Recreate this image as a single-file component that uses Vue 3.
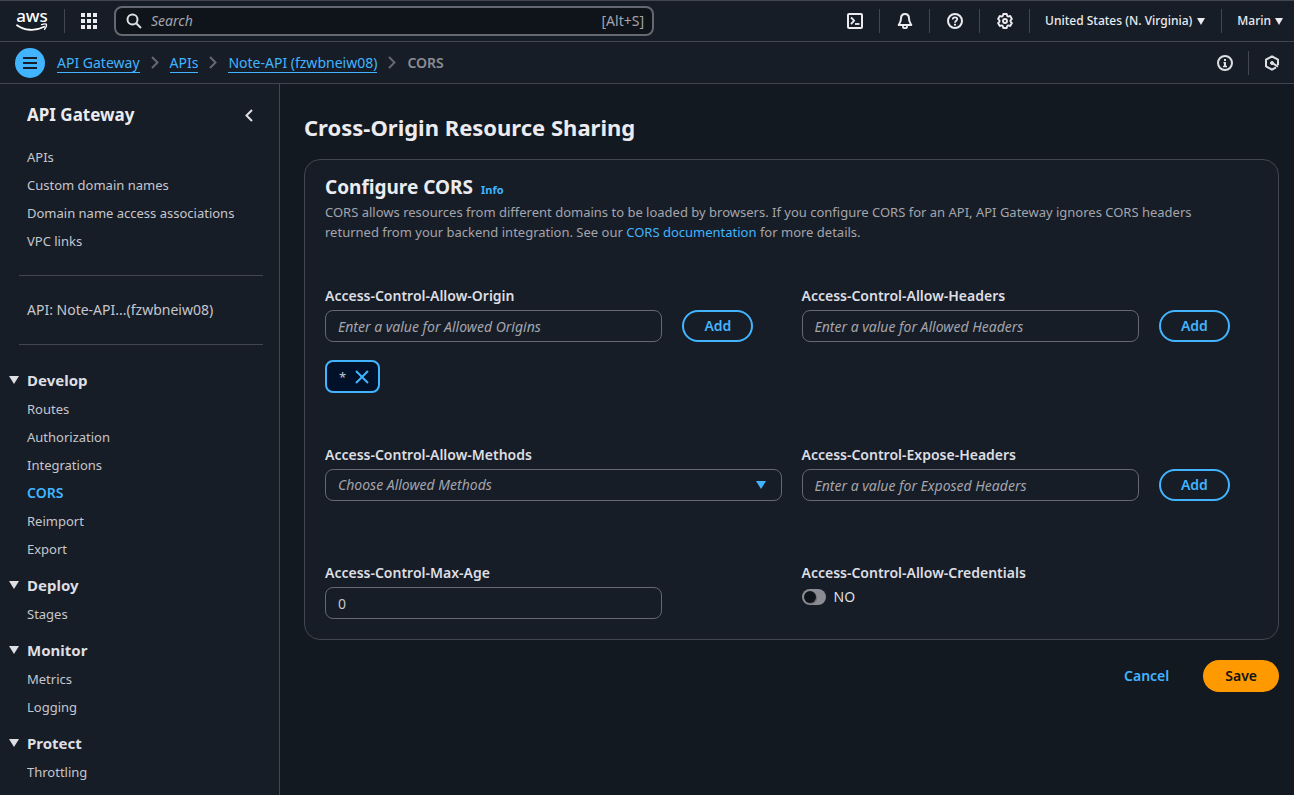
<script setup>
import { ref } from 'vue'

const topLinks = ['APIs', 'Custom domain names', 'Domain name access associations', 'VPC links']
const sections = [
  { title: 'Develop', items: ['Routes', 'Authorization', 'Integrations', 'CORS', 'Reimport', 'Export'] },
  { title: 'Deploy', items: ['Stages'] },
  { title: 'Monitor', items: ['Metrics', 'Logging'] },
  { title: 'Protect', items: ['Throttling'] }
]
const crumbs = ['API Gateway', 'APIs', 'Note-API (fzwbneiw08)']

const origin = ref('')
const headers = ref('')
const exposed = ref('')
const method = ref('')
const maxAge = ref('0')
const credentials = ref(false)
const origins = ref(['*'])

function addOrigin() {
  if (origin.value) origins.value.push(origin.value)
  origin.value = ''
}
</script>

<template>
  <div class="page">
    <header class="topbar">
      <a class="logo" href="#" aria-label="AWS home">
        <span class="logo-text">aws</span>
        <svg width="32" height="9" viewBox="0 0 32 9" fill="none" stroke="#fff" stroke-linecap="round" stroke-linejoin="round" aria-hidden="true">
          <path d="M1 2.2C8 7.4 19 8.6 28.2 3.8" stroke-width="1.8" />
          <path d="M25.6 1.6C27.6.9 29.4.7 30.3 1.2c.4 1.200-.2 3.300-1.700 5" stroke-width="1.400" />
        </svg>
      </a>
      <span class="sep"></span>
      <button class="icon-btn apps" aria-label="Services">
        <svg width="16" height="16" viewBox="0 0 16 16" fill="#ebebf0">
          <path d="M0 0h4v4H0zM6 0h4v4H6zM12 0h4v4h-4zM0 6h4v4H0zM6 6h4v4H6zM12 6h4v4h-4zM0 12h4v4H0zM6 12h4v4H6zM12 12h4v4h-4z" />
        </svg>
      </button>
      <label class="search">
        <svg width="16" height="16" viewBox="0 0 16 16" fill="none" stroke="#dedee3" stroke-width="2">
          <circle cx="6.500" cy="6.500" r="5" /><path d="M10.200 10.200 15 15" />
        </svg>
        <input type="search" placeholder="Search" aria-label="Search" />
        <span>[Alt+S]</span>
      </label>
      <div class="tools">
        <button class="icon-btn" aria-label="CloudShell">
          <svg width="16" height="16" viewBox="0 0 16 16" fill="none" stroke="#ebebf0" stroke-width="2" stroke-linejoin="round">
            <rect x="1" y="1" width="14" height="14" rx="1" /><path d="M4 4.500 7.200 7.700 4 11" stroke-width="1.800" /><path d="M8 11h4.500" stroke-width="1.800" />
          </svg>
        </button>
        <button class="icon-btn" aria-label="Notifications">
          <svg width="16" height="16" viewBox="0 0 16 16" fill="none" stroke="#ebebf0" stroke-width="2" stroke-linejoin="round">
            <path d="M8 1C5.200 1 4 3 4 5.500 4 8.500 3 9.500 1.700 12h12.600C13 9.500 12 8.500 12 5.500 12 3 10.800 1 8 1z" /><path d="M6 13v1.200c0 .6.800.9 2 .9s2-.3 2-.9V13" stroke-width="1.800" />
          </svg>
        </button>
        <button class="icon-btn" aria-label="Help">
          <svg width="16" height="16" viewBox="0 0 16 16" fill="none" stroke="#ebebf0" stroke-width="2">
            <circle cx="8" cy="8" r="7" /><path d="M5.700 6.500c0-1.500 1-2.200 2.300-2.200s2.300.8 2.300 2C10.300 7.800 8 7.800 8 9.700" stroke-width="1.700" /><path d="M8 10.800v1.800" />
          </svg>
        </button>
        <button class="icon-btn" aria-label="Settings">
          <svg width="16" height="16" viewBox="0 0 16 16" fill="none" stroke="#ebebf0" stroke-width="1.900" stroke-linejoin="round">
            <path d="M6.300 1h3.400l.5 2 1 .6 2-.6 1.700 2.900L13.500 7.400v1.200l1.400 1.500-1.700 2.900-2-.6-1 .6-.5 2H6.300l-.5-2-1-.6-2 .6-1.700-2.900 1.400-1.500V7.400L1.100 5.900 2.800 3l2 .6 1-.6z" /><circle cx="8" cy="8" r="2" />
          </svg>
        </button>
        <button class="menu">United States (N. Virginia)
          <svg width="8" height="7" viewBox="0 0 8 7" fill="#ebebf0"><path d="M0 0h8L4 7z" /></svg>
        </button>
        <button class="menu user">Marin
          <svg width="8" height="7" viewBox="0 0 8 7" fill="#ebebf0"><path d="M0 0h8L4 7z" /></svg>
        </button>
      </div>
    </header>

    <div class="crumbbar">
      <button class="nav-toggle" aria-label="Toggle navigation">
        <svg width="14" height="12" viewBox="0 0 14 12" stroke="#161d26" stroke-width="2"><path d="M0 1h14M0 6h14M0 11h14" /></svg>
      </button>
      <nav class="crumbs" aria-label="Breadcrumbs">
        <template v-for="c in crumbs" :key="c">
          <a href="#">{{ c }}</a>
          <svg width="8" height="13" viewBox="0 0 8 13" fill="none" stroke="#656871" stroke-width="2"><path d="M1 1l5.500 5.500L1 12" /></svg>
        </template>
        <span>CORS</span>
      </nav>
      <div class="crumb-tools">
        <button class="icon-btn" aria-label="Information">
          <svg width="16" height="16" viewBox="0 0 16 16" fill="none" stroke="#dedee3" stroke-width="2">
            <circle cx="8" cy="8" r="7" /><path d="M8 4v2" /><path d="M6.500 7.800H8V11M6 11.500h4" stroke-width="1.500" /><path d="M8 7v4.500" />
          </svg>
        </button>
        <span class="sep"></span>
        <button class="icon-btn" aria-label="Tools">
          <svg width="16" height="16" viewBox="0 0 16 16" fill="none" stroke="#dedee3" stroke-width="2" stroke-linejoin="round">
            <path d="M14 10V4.700L8 1.300 2 4.700v6.600l6 3.400 4-2.300" /><path d="M8 7.800l6 3.800" stroke-width="2" /><circle cx="8" cy="8" r="1.500" fill="#dedee3" stroke-width="1" />
          </svg>
        </button>
      </div>
    </div>

    <div class="body">
      <aside class="sidebar">
        <div class="side-head">
          <h2>API Gateway</h2>
          <button class="icon-btn" aria-label="Close navigation">
            <svg width="8" height="13" viewBox="0 0 8 13" fill="none" stroke="#dedee3" stroke-width="2"><path d="M7 1 1.500 6.500 7 12" /></svg>
          </button>
        </div>
        <ul class="links">
          <li v-for="l in topLinks" :key="l"><a href="#">{{ l }}</a></li>
        </ul>
        <hr />
        <p class="api-name">API: Note-API...(fzwbneiw08)</p>
        <hr />
        <section v-for="s in sections" :key="s.title" class="group">
          <h3>
            <button>
              <svg width="10" height="8" viewBox="0 0 10 8" fill="#dedee3"><path d="M0 0h10L5 8z" /></svg>
              {{ s.title }}
            </button>
          </h3>
          <ul class="links">
            <li v-for="i in s.items" :key="i"><a href="#" :class="{ active: i === 'CORS' }">{{ i }}</a></li>
          </ul>
        </section>
      </aside>

      <main>
        <h1>Cross-Origin Resource Sharing</h1>
        <form @submit.prevent>
          <div class="card">
            <div class="card-head">
              <h2>Configure CORS</h2>
              <a class="info" href="#">Info</a>
            </div>
            <p class="desc">CORS allows resources from different domains to be loaded by browsers. If you configure CORS for an API, API Gateway ignores CORS headers returned from your backend integration. See our <a href="#">CORS documentation</a> for more details.</p>

            <div class="fields">
              <div class="field">
                <label for="origin">Access-Control-Allow-Origin</label>
                <input id="origin" v-model="origin" class="box" type="text" placeholder="Enter a value for Allowed Origins" />
                <button class="add" type="button" @click="addOrigin">Add</button>
                <div class="tokens">
                  <span v-for="(o, i) in origins" :key="i" class="token">
                    {{ o }}
                    <button type="button" :aria-label="'Remove ' + o" @click="origins.splice(i, 1)">
                      <svg width="14" height="14" viewBox="0 0 14 14" fill="none" stroke="#42b4ff" stroke-width="2"><path d="M1 1l12 12M13 1 1 13" /></svg>
                    </button>
                  </span>
                </div>
              </div>
              <div class="field">
                <label for="headers">Access-Control-Allow-Headers</label>
                <input id="headers" v-model="headers" class="box" type="text" placeholder="Enter a value for Allowed Headers" />
                <button class="add" type="button">Add</button>
              </div>
              <div class="field">
                <label for="methods">Access-Control-Allow-Methods</label>
                <div class="select">
                  <select id="methods" v-model="method" class="box">
                    <option value="">Choose Allowed Methods</option>
                    <option>GET</option>
                    <option>POST</option>
                  </select>
                  <svg width="10" height="8" viewBox="0 0 10 8" fill="#42b4ff"><path d="M0 0h10L5 8z" /></svg>
                </div>
              </div>
              <div class="field spaced">
                <label for="exposed">Access-Control-Expose-Headers</label>
                <input id="exposed" v-model="exposed" class="box" type="text" placeholder="Enter a value for Exposed Headers" />
                <button class="add" type="button">Add</button>
              </div>
              <div class="field">
                <label for="age">Access-Control-Max-Age</label>
                <input id="age" v-model="maxAge" class="box" type="text" />
              </div>
              <div class="field">
                <span class="label">Access-Control-Allow-Credentials</span>
                <label class="toggle">
                  <input v-model="credentials" type="checkbox" aria-label="Access-Control-Allow-Credentials" />
                  {{ credentials ? 'YES' : 'NO' }}
                </label>
              </div>
            </div>
          </div>
          <div class="actions">
            <button class="cancel" type="button">Cancel</button>
            <button class="save" type="submit">Save</button>
          </div>
        </form>
      </main>
    </div>
  </div>
</template>

<style>
body { margin: 0; background: #131920; }
</style>

<style scoped>
* { box-sizing: border-box; }
.page {
  display: flex;
  flex-direction: column;
  min-height: 100vh;
  font: 13px/20px "Noto Sans", "Open Sans", sans-serif;
  color: #c6c6cd;
  background: #131920;
}
button, input, select { font: inherit; color: inherit; }
button { padding: 0; border: 0; background: none; cursor: pointer; }
h1, h2, h3, p, ul { margin: 0; padding: 0; }
ul { list-style: none; }
svg { display: block; flex: none; }
a { color: #42b4ff; text-decoration: none; }
.sep { flex: none; width: 1px; height: 24px; background: #424650; }

.topbar {
  display: flex;
  align-items: center;
  height: 42px;
  padding-left: 16px;
  border-top: 1px solid #424650;
  border-bottom: 1px solid #424650;
  background: #161d26;
}
.logo { width: 32px; margin-right: 16px; color: #fff; }
.logo-text { display: block; padding-bottom: 2px; font-size: 17px; line-height: 10px; font-weight: 500; text-align: center; }
.apps { margin: 0 17px 0 16px; }
.search {
  display: flex;
  align-items: center;
  flex: 0 1 540px;
  min-width: 0;
  height: 30px;
  padding: 0 8px 0 10px;
  gap: 9px;
  border: 2px solid #656871;
  border-radius: 8px;
  background: #0f141a;
  font-size: 14px;
  color: #a4a4ad;
}
.search input { flex: 1; min-width: 0; padding: 0; border: 0; outline: 0; background: none; }
input::placeholder { color: #a4a4ad; font-style: italic; opacity: 1; }
.tools { display: flex; align-items: center; margin-left: auto; }
.tools button { display: flex; align-items: center; height: 24px; }
.tools .icon-btn { width: 50px; justify-content: center; border-right: 1px solid #424650; }
.menu { gap: 5px; padding: 0 16px 0 15px; font-size: 12px; font-weight: 500; color: #ebebf0; white-space: nowrap; }
.user { gap: 4px; padding: 0 11px 0 15px; border-left: 1px solid #424650; }

.crumbbar {
  display: flex;
  align-items: center;
  height: 42px;
  padding: 0 14px 0 15px;
  border-bottom: 1px solid #424650;
  background: #161d26;
}
.nav-toggle {
  display: flex;
  align-items: center;
  justify-content: center;
  width: 30px;
  height: 30px;
  border-radius: 50%;
  background: #42b4ff;
}
.crumbs { display: flex; align-items: center; gap: 11px; margin-left: 12px; font-size: 14px; }
.crumbs a { padding-top: 1px; line-height: 18px; border-bottom: 1px solid #42b4ff; }
.crumbs span { color: #8c8c94; font-weight: 600; }
.crumb-tools { display: flex; align-items: center; gap: 15px; margin-left: auto; }

.body { display: flex; flex: 1; }
.sidebar { flex: none; width: 280px; padding: 20px 16px 12px 19px; border-right: 1px solid #424650; background: #161d26; }
.side-head { display: flex; align-items: center; justify-content: space-between; margin-bottom: 21px; padding: 0 10px 0 8px; }
.side-head h2 { font-size: 17px; line-height: 22px; color: #ebebf0; }
.links { display: grid; gap: 8px; padding-left: 8px; }
.links li { height: 20px; }
.links a { color: #c6c6cd; }
.links a.active { color: #42b4ff; font-size: 14px; font-weight: 600; }
hr { height: 1px; margin: 24px 0; border: 0; background: #424650; }
.api-name { padding-left: 8px; font-size: 14px; }
.group + .group { margin-top: 15px; }
.group h3 { margin-bottom: 8px; font-size: 15px; line-height: 22px; color: #dedee3; }
.group h3 button { display: flex; align-items: center; gap: 8px; margin-left: -10px; }

main { flex: 1; min-width: 0; padding: 28px 15px 20px 24px; }
h1 { margin-bottom: 17px; font-size: 22px; line-height: 30px; color: #ebebf0; }
.card { padding: 14px 20px 20px; border: 1px solid #424650; border-radius: 16px; background: #161d26; }
.card-head { display: flex; align-items: baseline; gap: 8px; margin-bottom: 2px; }
.card-head h2 { font-size: 19px; line-height: 26px; color: #ebebf0; }
.info { font-size: 11px; line-height: 16px; font-weight: 700; }
.desc { padding-right: 20px; color: #a4a4ad; }
.fields { display: grid; grid-template-columns: 1fr 1fr; gap: 52px 20px; margin-top: 44px; font-size: 14px; }
.field { display: grid; grid-template-columns: repeat(4, 1fr); column-gap: 20px; row-gap: 4px; align-content: start; }
.field > label, .label { grid-column: 1 / -1; }
.field > label:not(.toggle), .label { font-weight: 600; color: #dedee3; }
.field > .box { grid-column: span 3; }
.box { width: 100%; min-width: 0; height: 32px; padding: 0 12px; border: 1px solid #656871; border-radius: 8px; background: #161d26; outline: 0; }
.select { grid-column: 1 / -1; display: grid; align-items: center; }
.select > * { grid-area: 1 / 1; }
.select select { appearance: none; font-style: italic; color: #a4a4ad; }
.select svg { justify-self: end; margin-right: 16px; pointer-events: none; }
.spaced { padding-bottom: 10px; }
.add { justify-self: start; width: 71px; height: 32px; border: 2px solid #42b4ff; border-radius: 16px; font-weight: 600; color: #42b4ff; }
.tokens { grid-column: 1 / -1; display: flex; gap: 8px; margin-top: 14px; }
.token { display: flex; align-items: center; gap: 9px; height: 33px; padding: 0 9px 0 12px; border: 2px solid #42b4ff; border-radius: 8px; background: #001129; font-size: 13px; }
.toggle { display: flex; align-items: center; gap: 8px; color: #dedee3; }
.toggle input { appearance: none; width: 24px; height: 16px; margin: 0; padding: 2px; border-radius: 8px; background: #8c8c94; }
.toggle input::before { content: ""; display: block; width: 12px; height: 12px; border-radius: 50%; background: #0f141a; box-shadow: 1px 1px 1px rgba(0, 0, 0, .25); }
.toggle input:checked::before { margin-left: 8px; }
.actions { display: flex; justify-content: flex-end; gap: 12px; margin-top: 20px; font-size: 14px; font-weight: 600; }
.actions button { height: 32px; padding: 0 22px; border-radius: 16px; }
.cancel { color: #42b4ff; }
.save { background: #f90; color: #0f141a; }
</style>
